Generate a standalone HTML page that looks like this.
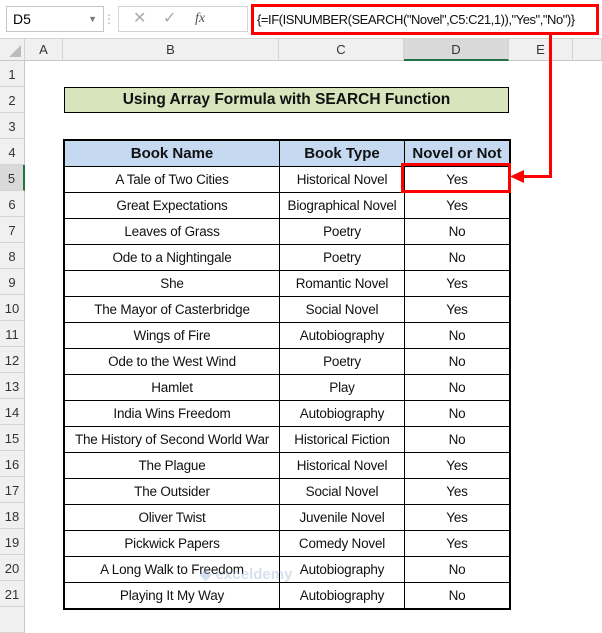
<!DOCTYPE html>
<html><head><style>
body{margin:0;width:602px;height:617px;background:#fff;position:relative;overflow:hidden;font-family:"Liberation Sans",Calibri,sans-serif;}
.a{position:absolute;box-sizing:border-box;}
.rh{position:absolute;left:0;width:25px;height:26px;background:#f0f0f0;border-bottom:1px solid #d4d4d4;border-right:1px solid #c8c8c8;box-sizing:border-box;font-size:13px;color:#333;text-align:center;line-height:28px;}
.ch{position:absolute;top:39px;height:22px;background:#f0f0f0;border-right:1px solid #d4d4d4;border-bottom:1px solid #c8c8c8;box-sizing:border-box;font-size:13px;color:#333;text-align:center;line-height:22px;}
table{position:absolute;left:63px;top:139px;border-collapse:collapse;border:2px solid #000;}
td{border:1px solid #000;height:25px;padding:0;text-align:center;font-size:13.5px;color:#111;letter-spacing:-0.2px;}
th{border:1px solid #000;height:25px;background:#c5d9f1;font-size:15px;font-weight:bold;color:#111;padding:0;}
</style></head><body>
<div class="a" style="left:0;top:0;width:602px;height:39px;background:#fff;border-bottom:1px solid #d4d4d4"></div>
<div class="a" style="left:6px;top:6px;width:98px;height:26px;border:1px solid #c6c6c6;font-size:14px;line-height:24px;padding-left:6px;">D5<span style="position:absolute;right:6px;font-size:9px;color:#777">▼</span></div>
<div class="a" style="left:103px;top:12px;color:#aaa;font-size:12px">⋮</div>
<div class="a" style="left:118px;top:6px;width:130px;height:26px;border:1px solid #d4d4d4;color:#aaa;font-size:16px;line-height:24px;"><span style="position:absolute;left:14px">✕</span><span style="position:absolute;left:44px">✓</span><span style="position:absolute;left:76px;font-family:'Liberation Serif';font-style:italic;color:#555;font-size:14px">fx</span></div>
<div class="a" style="left:251px;top:4px;width:348px;height:31px;border:3px solid #f00;font-size:13px;letter-spacing:-0.45px;line-height:25px;padding-left:3px;white-space:nowrap;overflow:hidden;color:#111">{=IF(ISNUMBER(SEARCH("Novel",C5:C21,1)),"Yes","No")}</div>

<div class="ch" style="left:0;width:25px;"><span style="position:absolute;right:3px;bottom:3px;width:0;height:0;border-left:12px solid transparent;border-bottom:12px solid #bbb"></span></div>
<div class="ch" style="left:25px;width:38px">A</div>
<div class="ch" style="left:63px;width:216px">B</div>
<div class="ch" style="left:279px;width:125px">C</div>
<div class="ch" style="left:404px;width:105px;background:#d9d9d9;border-bottom:2px solid #217346">D</div>
<div class="ch" style="left:509px;width:64px">E</div>
<div class="ch" style="left:573px;width:29px"></div>

<div class="rh" style="top:61px">1</div><div class="rh" style="top:87px">2</div><div class="rh" style="top:113px">3</div><div class="rh" style="top:139px">4</div>
<div class="rh" style="top:165px;background:#d9d9d9;border-right:2px solid #217346">5</div>
<div class="rh" style="top:191px">6</div><div class="rh" style="top:217px">7</div><div class="rh" style="top:243px">8</div><div class="rh" style="top:269px">9</div><div class="rh" style="top:295px">10</div><div class="rh" style="top:321px">11</div><div class="rh" style="top:347px">12</div><div class="rh" style="top:373px">13</div><div class="rh" style="top:399px">14</div><div class="rh" style="top:425px">15</div><div class="rh" style="top:451px">16</div><div class="rh" style="top:477px">17</div><div class="rh" style="top:503px">18</div><div class="rh" style="top:529px">19</div><div class="rh" style="top:555px">20</div><div class="rh" style="top:581px">21</div><div class="rh" style="top:607px"></div>

<div class="a" style="left:64px;top:87px;width:445px;height:26px;background:#d8e4bc;border:1px solid #000;font-weight:bold;font-size:15.5px;text-align:center;line-height:24px;color:#111">Using Array Formula with SEARCH Function</div>

<table>
<tr><th style="width:214px">Book Name</th><th style="width:124px">Book Type</th><th style="width:104px">Novel or Not</th></tr>
<tr><td>A Tale of Two Cities</td><td>Historical Novel</td><td>Yes</td></tr>
<tr><td>Great Expectations</td><td>Biographical Novel</td><td>Yes</td></tr>
<tr><td>Leaves of Grass</td><td>Poetry</td><td>No</td></tr>
<tr><td>Ode to a Nightingale</td><td>Poetry</td><td>No</td></tr>
<tr><td>She</td><td>Romantic Novel</td><td>Yes</td></tr>
<tr><td>The Mayor of Casterbridge</td><td>Social Novel</td><td>Yes</td></tr>
<tr><td>Wings of Fire</td><td>Autobiography</td><td>No</td></tr>
<tr><td>Ode to the West Wind</td><td>Poetry</td><td>No</td></tr>
<tr><td>Hamlet</td><td>Play</td><td>No</td></tr>
<tr><td>India Wins Freedom</td><td>Autobiography</td><td>No</td></tr>
<tr><td>The History of Second World War</td><td>Historical Fiction</td><td>No</td></tr>
<tr><td>The Plague</td><td>Historical Novel</td><td>Yes</td></tr>
<tr><td>The Outsider</td><td>Social Novel</td><td>Yes</td></tr>
<tr><td>Oliver Twist</td><td>Juvenile Novel</td><td>Yes</td></tr>
<tr><td>Pickwick Papers</td><td>Comedy Novel</td><td>Yes</td></tr>
<tr><td>A Long Walk to Freedom</td><td>Autobiography</td><td>No</td></tr>
<tr><td>Playing It My Way</td><td>Autobiography</td><td>No</td></tr>
</table>

<div class="a" style="left:401px;top:163px;width:110px;height:30px;border:3px solid #f00"></div>
<div class="a" style="left:549px;top:35px;width:3px;height:143px;background:#f00"></div>
<div class="a" style="left:520px;top:175px;width:32px;height:3px;background:#f00"></div>
<svg class="a" style="left:510px;top:169px" width="14" height="15"><polygon points="0,7.5 14,1 14,14" fill="#f00"/></svg>
<div class="a" style="left:200px;top:565px;font-size:15px;font-weight:bold;color:#8fa8d0;opacity:.35">◆ exceldemy</div>
</body></html>
